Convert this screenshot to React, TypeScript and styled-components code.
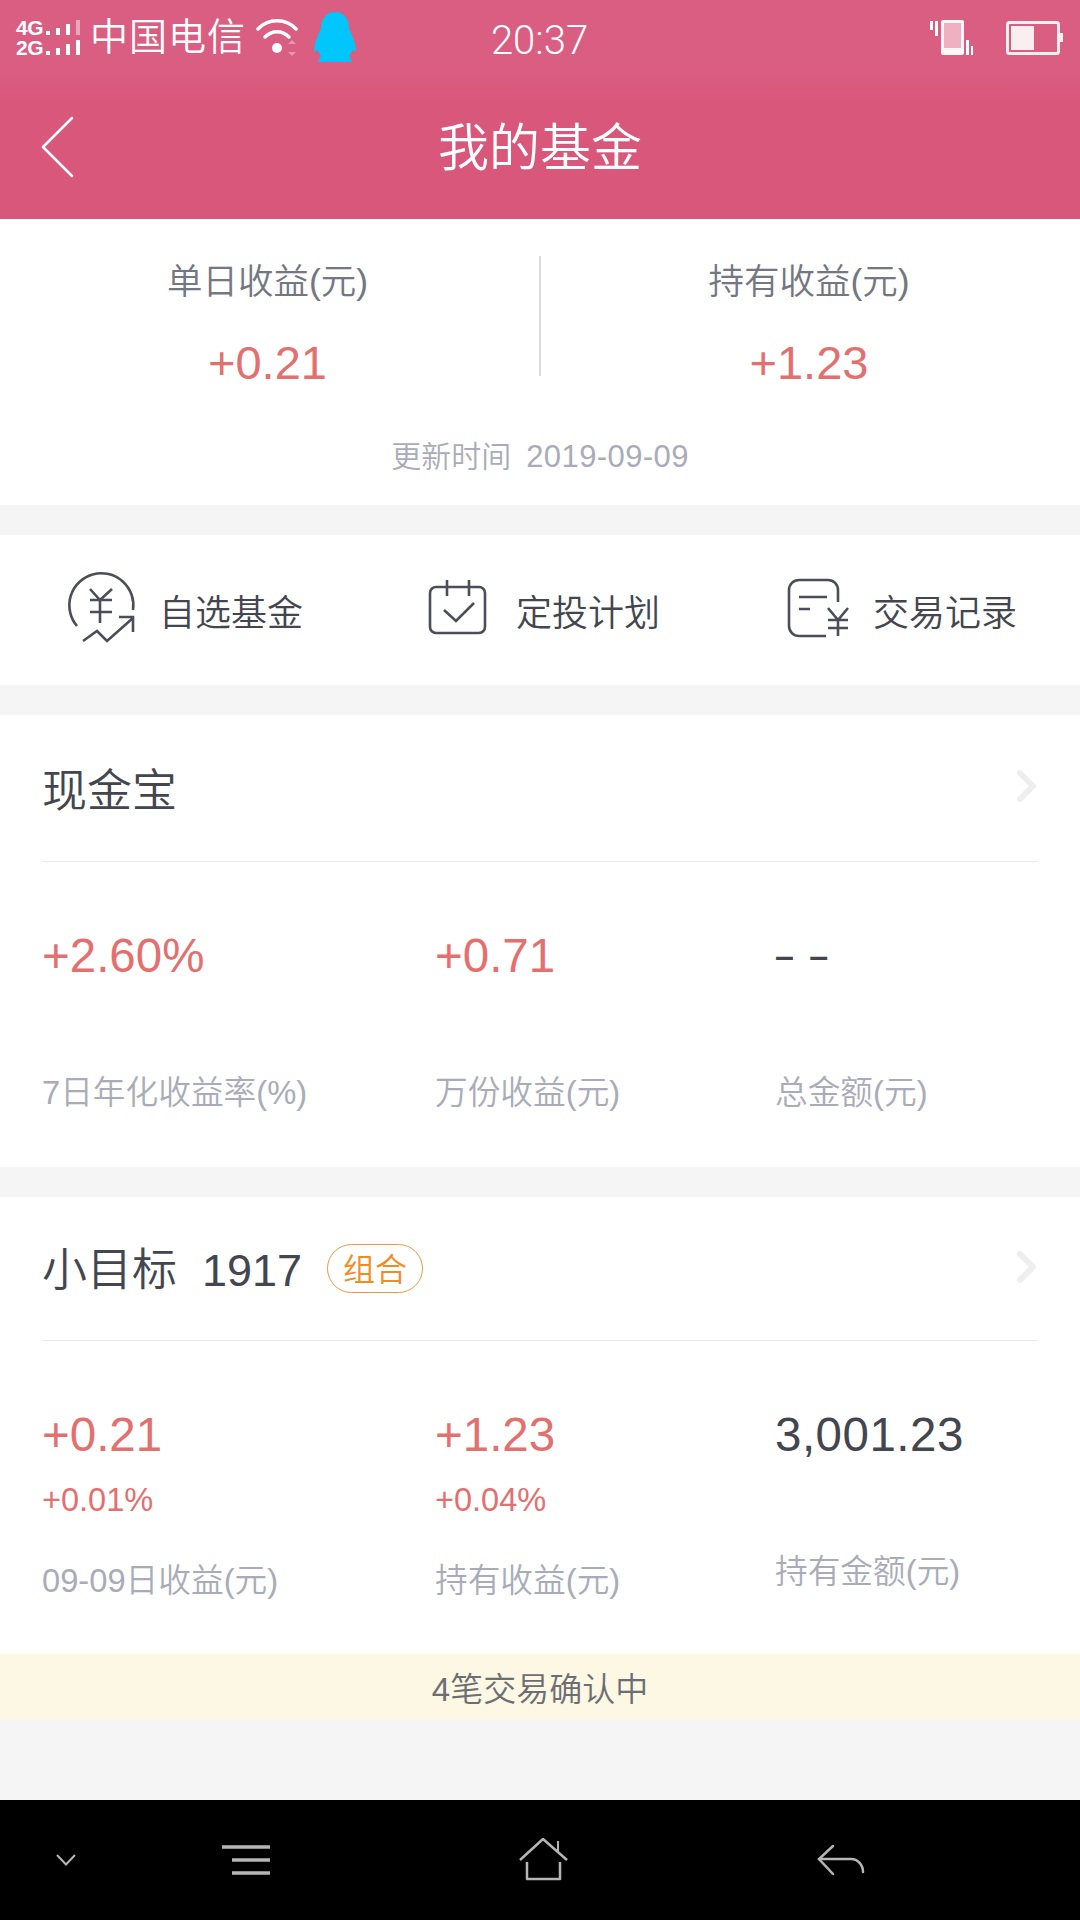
import React from 'react';
import styled, { createGlobalStyle } from 'styled-components';

const GlobalStyle = createGlobalStyle`
  html, body {
    margin: 0;
    padding: 0;
    background: #f5f5f5;
  }
  body {
    font-family: "Liberation Sans", "Noto Sans CJK SC", sans-serif;
    font-weight: 350;
  }
`;

const Page = styled.div`
  width: 1080px;
  height: 1920px;
  display: flex;
  flex-direction: column;
  overflow: hidden;
  background: #f5f5f5;
`;

const TopArea = styled.div`
  height: 219px;
  background: linear-gradient(#d95e81 0, #d95e81 70px, #da577c 100px);
  color: #fff;
`;

const StatusBar = styled.div`
  height: 74px;
  display: grid;
  grid-template-columns: 1fr auto 1fr;
  grid-template-rows: 74px;
  align-items: center;
  padding: 0 17px 0 16px;
`;

const StatusLeft = styled.div`
  display: flex;
  align-items: center;
`;

const NetworkBlock = styled.div`
  position: relative;
  width: 66px;
  height: 74px;
`;

const NetworkLabel = styled.span<{ $row: number }>`
  position: absolute;
  left: 0;
  top: ${({ $row }) => ($row === 0 ? 18 : 38)}px;
  font-size: 21px;
  line-height: 19px;
  font-weight: 700;
  letter-spacing: -0.5px;
`;

const Carrier = styled.span`
  margin-left: 8px;
  font-size: 38px;
  line-height: 74px;
  letter-spacing: 1px;
`;

const Clock = styled.span`
  margin-top: 8px;
  font-family: Roboto, sans-serif;
  font-size: 40px;
  font-weight: 300;
  line-height: 74px;
`;

const StatusRight = styled.div`
  display: flex;
  justify-content: flex-end;
  align-items: center;
  gap: 33px;
  padding-top: 2px;
`;

const NavHeader = styled.header`
  height: 145px;
  display: grid;
  grid-template-columns: 1fr auto 1fr;
  align-items: center;
`;

const BackSlot = styled.div`
  display: flex;
  align-items: center;
  padding-left: 40px;
`;

const Title = styled.h1`
  margin: 4px 0 0;
  font-size: 51px;
  font-weight: 350;
  line-height: 60px;
`;

const Summary = styled.section`
  height: 286px;
  background: #fff;
  display: flex;
  flex-direction: column;
`;

const SummaryRow = styled.div`
  display: grid;
  grid-template-columns: 541px 1fr;
  margin-top: 37px;
`;

const SummaryCell = styled.div<{ $divided?: boolean }>`
  height: 120px;
  padding-right: ${({ $divided }) => ($divided ? 4 : 3)}px;
  text-align: center;
  border-right: ${({ $divided }) => ($divided ? '2px solid #dcdcdc' : 'none')};
`;

const SummaryLabel = styled.div`
  font-size: 35.5px;
  line-height: 52px;
  color: #747681;
`;

const SummaryValue = styled.div`
  margin-top: 26px;
  font-size: 47px;
  line-height: 58px;
  color: #e36f6f;
`;

const UpdateTime = styled.div`
  margin-top: 61px;
  text-align: center;
  font-size: 30px;
  line-height: 40px;
  color: #a9acb8;
`;

const UpdateDate = styled.span`
  margin-left: 15px;
  font-size: 31px;
  letter-spacing: 0.4px;
`;

const Shortcuts = styled.nav`
  height: 150px;
  margin-top: 30px;
  background: #fff;
  display: grid;
  grid-template-columns: 357px 357px 1fr;
  align-items: center;
  padding-left: 63px;
`;

const Shortcut = styled.div`
  display: grid;
  grid-template-columns: 80px auto;
  column-gap: 16px;
  align-items: center;
  justify-content: start;
  font-size: 36px;
  color: #43454f;
`;

const FundCard = styled.section<{ $bottom: number }>`
  margin-top: 30px;
  background: #fff;
  padding: 0 42px ${({ $bottom }) => $bottom}px;
`;

const CardHeader = styled.div<{ $height: number }>`
  height: ${({ $height }) => $height}px;
  display: flex;
  align-items: center;
  justify-content: space-between;
  border-bottom: 1px solid #e9e9ee;
`;

const CardTitleGroup = styled.div<{ $shift: number }>`
  display: flex;
  align-items: center;
  margin-top: ${({ $shift }) => $shift}px;
`;

const CardTitle = styled.h2`
  margin: 0;
  font-size: 45px;
  font-weight: 350;
  line-height: 60px;
  color: #43454f;
  white-space: pre;
`;

const Badge = styled.span`
  margin: -5px 0 0 25px;
  padding-bottom: 2px;
  box-sizing: border-box;
  width: 96px;
  height: 49px;
  border: 1px solid #e79a45;
  border-radius: 25px;
  display: flex;
  align-items: center;
  justify-content: center;
  font-size: 32px;
  color: #f58a1f;
`;

const ChevronSlot = styled.div`
  display: flex;
  margin-bottom: 4px;
`;

const Metrics = styled.div`
  display: grid;
  grid-template-columns: 393px 340px 1fr;
  padding-top: 64px;
`;

const Metric = styled.div`
  display: flex;
  flex-direction: column;
`;

const MetricValue = styled.div<{ $plain?: boolean }>`
  font-size: 47.5px;
  line-height: 60px;
  letter-spacing: ${({ $plain }) => ($plain ? '0.5px' : '0')};
  color: ${({ $plain }) => ($plain ? '#43454f' : '#e36f6f')};
`;

const EmptyValue = styled.div`
  height: 60px;
  font-size: 34px;
  font-weight: 700;
  line-height: 58px;
  word-spacing: 6px;
  color: #43454f;
`;

const MetricSub = styled.div`
  margin-top: 15px;
  font-size: 32.5px;
  line-height: 40px;
  color: #e36f6f;
`;

const MetricLabel = styled.div<{ $gap: number }>`
  margin-top: ${({ $gap }) => $gap}px;
  font-size: 32.7px;
  line-height: 40px;
  color: #a9acb8;
`;

const PendingBanner = styled.div`
  height: 66px;
  background: #fdf8e3;
  display: flex;
  align-items: center;
  justify-content: center;
  font-size: 33px;
  color: #6d6e74;
`;

const Spacer = styled.div`
  flex: 1;
`;

const SystemNav = styled.div`
  height: 120px;
  background: #000;
  display: grid;
  grid-template-columns: 132px 228px 368px 226px;
  justify-items: center;
  align-items: center;
`;

const signalBars = [31, 28, 24, 20];

const NetworkIcon = () => (
  <svg width="66" height="74" viewBox="0 0 66 74" style={{ position: 'absolute', left: 0, top: 0 }}>
    {signalBars.map((top, i) => (
      <g key={top}>
        <rect x={30 + i * 10} y={top} width={4} height={35 - top} fill="#fff" opacity={i === 3 ? 0.45 : 1} />
        <rect x={30 + i * 10} y={top + 20} width={4} height={35 - top} fill="#fff" />
      </g>
    ))}
  </svg>
);

const WifiIcon = () => (
  <svg width="48" height="74" viewBox="0 0 48 74" fill="none" stroke="#fff" strokeLinecap="round" style={{ marginLeft: 10 }}>
    <path d="M2 29 C12 18 30 18 40 29" strokeWidth="3.5" />
    <path d="M9 37 C16 30 26 30 33 37" strokeWidth="3.5" />
    <circle cx="21" cy="48" r="5" fill="#fff" stroke="none" />
    <path d="M32 44 L36 40 L40 44 Z M32 52 L40 52 L36 56 Z" fill="#fff" stroke="none" opacity="0.35" />
  </svg>
);

const PenguinIcon = () => (
  <svg width="44" height="74" viewBox="0 0 44 74" style={{ marginLeft: 9 }}>
    <path
      d="M22 12 C32 12 36 20 36 29 C39 35 43 43 43 52 L40 50 L36 56 L39 62 L5 62 L8 56 L4 50 L1 52 C1 43 5 35 8 29 C8 20 12 12 22 12 Z"
      fill="#00c6fb"
    />
  </svg>
);

const VibrateIcon = () => (
  <svg width="43" height="36" viewBox="0 0 43 36">
    <rect x="11" y="0" width="23" height="35" rx="2" fill="#fff" opacity="0.95" />
    <rect x="14" y="3" width="17" height="25" fill="#efb0c2" />
    <rect x="0" y="1" width="3" height="9" fill="#fff" />
    <rect x="5" y="1" width="3" height="15" fill="#fff" />
    <rect x="36" y="20" width="3" height="15" fill="#fff" />
    <rect x="41" y="26" width="2" height="9" fill="#fff" />
  </svg>
);

const BatteryIcon = () => (
  <svg width="57" height="34" viewBox="0 0 57 34">
    <rect x="1.5" y="1.5" width="51" height="31" rx="2" fill="none" stroke="#fbeef1" strokeWidth="3" />
    <rect x="5" y="5" width="23" height="24" fill="#fbeef1" />
    <rect x="54" y="12" width="3" height="9" fill="#fbeef1" />
  </svg>
);

const BackIcon = () => (
  <svg width="36" height="62" viewBox="0 0 36 62" fill="none" stroke="#fff" strokeWidth="2.5" strokeLinecap="round" strokeLinejoin="round">
    <path d="M32 2 L3 31 L32 60" />
  </svg>
);

const SelfSelectIcon = () => (
  <svg width="80" height="80" viewBox="63 570 80 80" fill="none" stroke="#4b4d58" strokeWidth="2.6">
    <path d="M77 626 A32 32 0 1 1 133 610" />
    <path d="M90 589 L100 600 L112 589 M90 600 H112 M90 612 H112 M100 600 V623" />
    <path d="M83 641 L97 631 L107 641 L133 618 M119 617 H133 V632" />
  </svg>
);

const PlanIcon = () => (
  <svg width="80" height="80" viewBox="420 570 80 80" fill="none" stroke="#4b4d58" strokeWidth="2.6">
    <rect x="430" y="587" width="55" height="46" rx="6" />
    <path d="M447 580 V596 M469 580 V596" />
    <path d="M444 610 L456 621 L474 603" />
  </svg>
);

const RecordIcon = () => (
  <svg width="80" height="80" viewBox="777 570 80 80" fill="none" stroke="#4b4d58" strokeWidth="2.6">
    <path d="M838 602 V590 A10 10 0 0 0 828 580 H799 A10 10 0 0 0 789 590 V626 A10 10 0 0 0 799 636 H826" />
    <path d="M799 597 H827 M799 609 H810" />
    <path d="M828 608 L838 620 L848 608 M828 620 H848 M828 628 H848 M838 620 V636" />
  </svg>
);

const ChevronIcon = () => (
  <ChevronSlot>
    <svg width="22" height="34" viewBox="0 0 22 34" fill="none" stroke="#eeeeee" strokeWidth="6" strokeLinecap="round" strokeLinejoin="round">
      <path d="M4 4 L17 17 L4 30" />
    </svg>
  </ChevronSlot>
);

const NavChevron = () => (
  <svg width="20" height="12" viewBox="0 0 20 12" fill="none" stroke="#b5b5b5" strokeWidth="2">
    <path d="M1 1 L10 10.5 L19 1" />
  </svg>
);

const NavMenu = () => (
  <svg width="48" height="30" viewBox="0 0 48 30" fill="none" stroke="#b5b5b5" strokeWidth="3.5">
    <path d="M0 2 H48 M10 15 H48 M10 28 H48" />
  </svg>
);

const NavHome = () => (
  <svg width="50" height="44" viewBox="0 0 50 44" fill="none" stroke="#b5b5b5" strokeWidth="2.5" strokeLinejoin="round">
    <path d="M1 22 L24 1 L48 22" />
    <path d="M39 3 V13" strokeWidth="2" />
    <path d="M8 24 V41 H41 V24" />
  </svg>
);

const NavBack = () => (
  <svg width="48" height="32" viewBox="0 0 48 32" fill="none" stroke="#b5b5b5" strokeWidth="2.5" strokeLinecap="round">
    <path d="M16 2 L2 15 L16 30" />
    <path d="M2 15 H34 C41 15 46 21 46 28" />
  </svg>
);

const shortcuts = [
  { label: '自选基金', icon: <SelfSelectIcon /> },
  { label: '定投计划', icon: <PlanIcon /> },
  { label: '交易记录', icon: <RecordIcon /> },
];

export default function App() {
  return (
    <Page>
      <GlobalStyle />
      <TopArea>
        <StatusBar>
          <StatusLeft>
            <NetworkBlock>
              <NetworkLabel $row={0}>4G</NetworkLabel>
              <NetworkLabel $row={1}>2G</NetworkLabel>
              <NetworkIcon />
            </NetworkBlock>
            <Carrier>中国电信</Carrier>
            <WifiIcon />
            <PenguinIcon />
          </StatusLeft>
          <Clock>20:37</Clock>
          <StatusRight>
            <VibrateIcon />
            <BatteryIcon />
          </StatusRight>
        </StatusBar>
        <NavHeader>
          <BackSlot>
            <BackIcon />
          </BackSlot>
          <Title>我的基金</Title>
          <span />
        </NavHeader>
      </TopArea>

      <Summary>
        <SummaryRow>
          <SummaryCell $divided>
            <SummaryLabel>单日收益(元)</SummaryLabel>
            <SummaryValue>+0.21</SummaryValue>
          </SummaryCell>
          <SummaryCell>
            <SummaryLabel>持有收益(元)</SummaryLabel>
            <SummaryValue>+1.23</SummaryValue>
          </SummaryCell>
        </SummaryRow>
        <UpdateTime>
          更新时间<UpdateDate>2019-09-09</UpdateDate>
        </UpdateTime>
      </Summary>

      <Shortcuts>
        {shortcuts.map((item) => (
          <Shortcut key={item.label}>
            {item.icon}
            <span>{item.label}</span>
          </Shortcut>
        ))}
      </Shortcuts>

      <FundCard $bottom={54}>
        <CardHeader $height={146}>
          <CardTitleGroup $shift={8}>
            <CardTitle>现金宝</CardTitle>
          </CardTitleGroup>
          <ChevronIcon />
        </CardHeader>
        <Metrics>
          <Metric>
            <MetricValue>+2.60%</MetricValue>
            <MetricLabel $gap={87}>7日年化收益率(%)</MetricLabel>
          </Metric>
          <Metric>
            <MetricValue>+0.71</MetricValue>
            <MetricLabel $gap={87}>万份收益(元)</MetricLabel>
          </Metric>
          <Metric>
            <EmptyValue>– –</EmptyValue>
            <MetricLabel $gap={87}>总金额(元)</MetricLabel>
          </Metric>
        </Metrics>
      </FundCard>

      <FundCard $bottom={53}>
        <CardHeader $height={143}>
          <CardTitleGroup $shift={4}>
            <CardTitle>小目标  1917</CardTitle>
            <Badge>组合</Badge>
          </CardTitleGroup>
          <ChevronIcon />
        </CardHeader>
        <Metrics>
          <Metric>
            <MetricValue>+0.21</MetricValue>
            <MetricSub>+0.01%</MetricSub>
            <MetricLabel $gap={41}>09-09日收益(元)</MetricLabel>
          </Metric>
          <Metric>
            <MetricValue>+1.23</MetricValue>
            <MetricSub>+0.04%</MetricSub>
            <MetricLabel $gap={41}>持有收益(元)</MetricLabel>
          </Metric>
          <Metric>
            <MetricValue $plain>3,001.23</MetricValue>
            <MetricLabel $gap={87}>持有金额(元)</MetricLabel>
          </Metric>
        </Metrics>
      </FundCard>

      <PendingBanner>4笔交易确认中</PendingBanner>
      <Spacer />

      <SystemNav>
        <NavChevron />
        <NavMenu />
        <NavHome />
        <NavBack />
      </SystemNav>
    </Page>
  );
}
